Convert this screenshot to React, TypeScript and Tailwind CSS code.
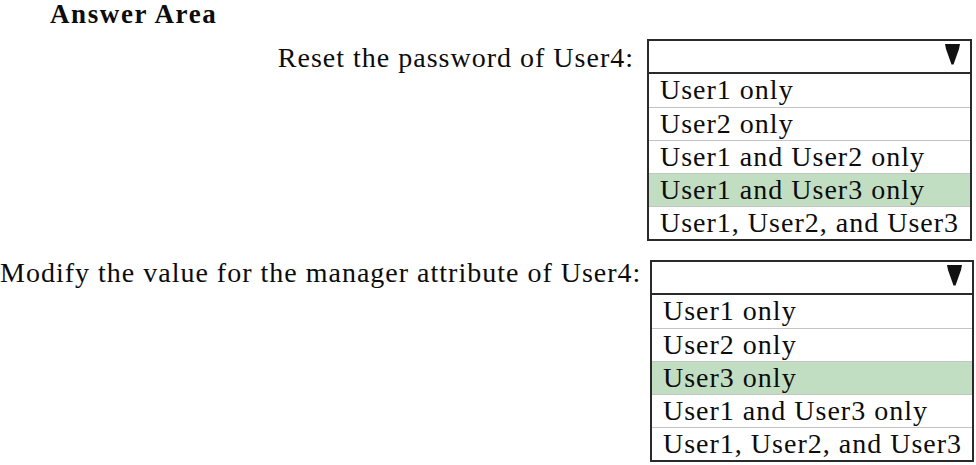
import React from 'react'

type Dropdown = {
  label: string
  options: string[]
  selected: number
}

const questions: Dropdown[] = [
  {
    label: 'Reset the password of User4:',
    options: ['User1 only', 'User2 only', 'User1 and User2 only', 'User1 and User3 only', 'User1, User2, and User3'],
    selected: 3,
  },
  {
    label: 'Modify the value for the manager attribute of User4:',
    options: ['User1 only', 'User2 only', 'User3 only', 'User1 and User3 only', 'User1, User2, and User3'],
    selected: 2,
  },
]

function Arrow() {
  return (
    <svg width="15" height="21" viewBox="0 0 15 21" className="block">
      <polygon points="0,0 15,0 14,5 8.5,20.5 6.5,20.5 1,5" fill="#111" />
    </svg>
  )
}

function AnswerBox({ q, className }: { q: Dropdown; className: string }) {
  return (
    <div className={`border-2 border-[#2a2a2a] bg-white ${className}`}>
      <div className="h-[33px] border-b-2 border-[#2a2a2a] flex items-start justify-end pr-[10px] pt-[3px]">
        <Arrow />
      </div>
      {q.options.map((opt, i) => (
        <div
          key={opt}
          className={`h-[33px] leading-[32px] pl-[11px] whitespace-nowrap ${i > 0 ? 'border-t border-[#c4c4c4]' : ''} ${
            i === q.selected ? 'bg-[#c2dec2]' : ''
          }`}
        >
          {opt}
        </div>
      ))}
    </div>
  )
}

export default function App() {
  return (
    <div className="w-[976px] h-[465px] bg-white text-[#0c0c0c] overflow-hidden font-['Liberation_Serif','Times_New_Roman',serif]">
      <div className="pl-[50px] h-[29px] leading-[29px] text-[27px] font-bold tracking-[1.6px]">Answer Area</div>

      <div className="text-[28px] tracking-[1px]">
        <div className="flex items-start mt-[10px]">
          <div className="w-[634px] text-right leading-[34px] pt-[2px] whitespace-nowrap">{questions[0].label}</div>
          <AnswerBox q={questions[0]} className="ml-[13px] w-[325px]" />
        </div>

        <div className="flex items-start mt-[19px]">
          <div className="w-[640px] text-right leading-[34px] -mt-[4px] whitespace-nowrap">{questions[1].label}</div>
          <AnswerBox q={questions[1]} className="ml-[10px] w-[324px]" />
        </div>
      </div>
    </div>
  )
}
